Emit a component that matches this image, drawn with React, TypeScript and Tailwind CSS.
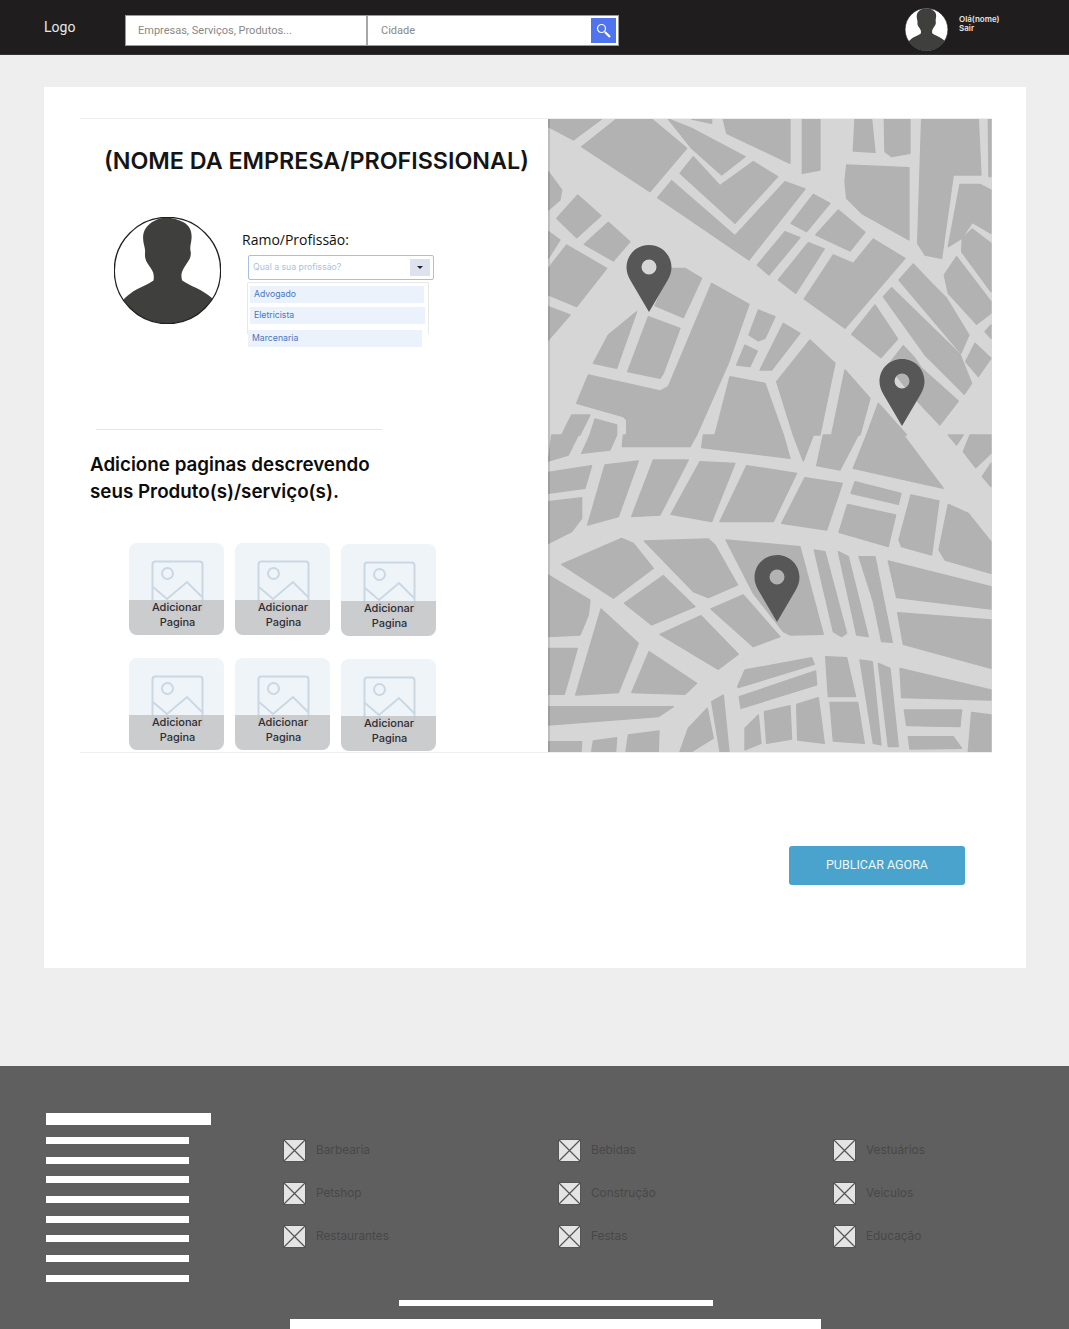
import { Fragment } from 'react'

// map blocks, traced from the picture in 3x coordinates
const mapTop = [
  '10,12 170,12 85,75 10,35', '110,95 215,12 320,12 425,100 315,230', '370,12 440,40 600,125 530,180 440,100',
  '440,12 500,12 500,25', '535,12 735,12 735,145 545,55', '772,12 825,12 825,165 772,175', '930,12 980,12 990,112 925,108',
  '1018,12 1095,12 1095,115 1040,125 1020,110', '1130,12 1300,12 1308,180 1225,180 1190,430 1140,420 1118,385',
  '1330,12 1338,12 1338,185 1332,185', '905,150 1092,158 1092,375 950,295 905,250 900,200',
  '445,125 525,212 625,140 698,185 570,325 405,175', '380,197 570,362 720,200 780,222 612,435 338,248',
  '805,238 855,265 785,350 738,325', '880,285 960,352 915,408 812,360', '720,350 765,368 672,480 637,450',
  '790,383 838,402 752,535 700,495', '865,420 925,445 985,372 1080,430 900,640 778,552',
  '1245,208 1305,208 1338,225 1338,355 1282,322 1250,370 1210,395', '1105,447 1165,510 1205,550 1272,660 1248,715 1062,495',
  '1235,425 1338,560 1338,595 1295,628 1210,535 1198,480', '1252,370 1282,342 1338,385 1338,530 1250,410',
  '1015,545 1040,518 1245,718 1280,805 1258,838 1140,720', '990,570 1058,672 1008,728 920,658', '1290,685 1338,730 1300,785 1262,740',
  '1338,630 1338,670 1320,650', '1075,692 1110,730 1130,760 1240,858 1185,930 1100,840 1030,750', '1000,865 1085,960 965,960',
  '10,170 50,225 45,255 10,285', '98,240 168,302 95,368 35,310', '190,322 255,380 205,438 118,388', '10,460 65,390 185,460 95,575 10,540',
  '10,350 45,375 10,430', '10,575 75,600 10,675', '380,460 420,460 470,490 415,608 330,572', '310,605 405,640 355,775 345,790 248,770',
  '275,590 215,760 145,745 190,660', '130,780 345,828 370,815 500,505 612,568 550,745 455,960 245,960 245,915 235,905 95,865',
  '640,585 690,605 660,670 640,678 612,660', '600,690 637,708 615,755 575,750', '715,625 765,655 680,765 645,765',
  '795,675 870,745 825,960 745,960 695,800', '555,785 660,805 715,960 510,960', '900,765 975,850 945,960 860,960',
  '80,900 135,900 105,960 50,960', '150,912 215,930 215,960 135,960',
]

const mapBottom = [
  '20,0 100,0 70,60 10,78', '135,0 215,0 195,45 110,55', '235,0 455,0 435,35 232,35', '475,0 715,0 735,70 470,38', '745,0 805,0 775,78',
  '835,0 940,0 885,105 815,92', '965,0 1075,0 1195,160 925,100', '1210,0 1255,0 1235,30', '1255,50 1275,0 1338,0 1338,55 1292,98',
  '1338,85 1338,155 1312,125', '10,112 140,92 120,160 10,175', '10,200 110,188 110,250 80,290 10,325', '180,90 280,78 220,245 128,270',
  '325,75 430,75 345,240 260,245', '465,80 570,85 500,260 378,238', '605,92 755,115 685,260 525,260', '780,128 892,145 845,285 710,265',
  '930,140 1068,175 1060,208 918,175', '908,208 1052,240 1030,335 882,292', '1098,180 1182,198 1160,360 1070,335 1062,315',
  '1210,208 1270,235 1338,320 1338,415 1200,375 1182,345', '50,388 230,310 265,325 325,400 205,490', '298,318 490,312 510,330 578,450 490,488 445,470',
  '543,315 765,335 835,598 735,600 715,590 625,475', '808,345 840,350 905,595 890,605 865,590', '880,350 910,365 970,605 935,600',
  '942,365 990,365 1042,622 1010,620 985,500', '1030,378 1338,455 1338,522 1055,488', '1058,533 1338,555 1338,700 1075,628',
  '355,422 450,515 320,570 238,505', '595,480 705,605 625,635 498,522', '468,542 580,658 520,703 345,598', '10,420 135,495 130,540 105,600 10,605',
  '10,640 97,640 58,778 10,778', '168,522 280,625 220,773 92,780', '312,650 455,745 420,778 260,773', '10,815 385,815 340,845 10,870',
  '10,920 110,920 108,950 10,950', '145,918 215,908 212,950 140,950', '250,900 342,888 340,950 243,950', '405,950 430,880 487,820 505,910 440,950',
  '500,800 535,780 552,950 525,950', '578,755 600,705 800,668 808,688 580,758', '583,785 812,708 815,750 588,820', '600,880 640,840 648,925 600,945',
  '658,830 735,812 740,912 665,925', '755,808 820,788 838,925 758,915', '842,665 905,668 932,785 850,785', '855,802 938,802 958,925 865,918',
  '945,675 982,680 1008,930 985,925', '1000,685 1035,700 1060,935 1030,935', '1065,700 1338,765 1338,795 1070,788', '1078,825 1250,825 1245,875 1085,872',
  '1090,905 1225,905 1250,940 1095,942', '1280,832 1338,840 1338,950 1270,950',
]

const pins = [
  { x: 649, y: 245 },
  { x: 902, y: 359 },
  { x: 777, y: 555 },
]

function MapPicture() {
  return (
    <svg width="444" height="633" viewBox="548 119 444 633" className="block shrink-0">
      <rect x="548" y="119" width="444" height="633" fill="#d6d6d6" />
      <g transform="translate(545 115) scale(0.3333)" fill="#b2b2b2" stroke="#b2b2b2" strokeWidth="4" strokeLinejoin="round">
        {mapTop.map((p) => <polygon key={p} points={p} />)}
      </g>
      <g transform="translate(545 435) scale(0.3333)" fill="#b2b2b2" stroke="#b2b2b2" strokeWidth="4" strokeLinejoin="round">
        {mapBottom.map((p) => <polygon key={p} points={p} />)}
      </g>
      <rect x="548" y="119" width="2" height="633" fill="#000" opacity="0.12" />
      {pins.map((pin) => (
        <path
          key={pin.x}
          transform={`translate(${pin.x} ${pin.y})`}
          fillRule="evenodd"
          fill="#575757"
          d="M0 0C12.6 0 22.5 9.9 22.5 22.3C22.5 27 21 31 18.5 35.5L0 67L-18.5 35.5C-21 31 -22.5 27 -22.5 22.3C-22.5 9.9 -12.6 0 0 0ZM0 14.5A7.5 7.5 0 1 0 0 29.5A7.5 7.5 0 1 0 0 14.5Z"
        />
      ))}
    </svg>
  )
}

function Avatar({ size }: { size: number }) {
  return (
    <svg width={size} height={size} viewBox="0 0 320 320" className="block shrink-0">
      <clipPath id={`face-${size}`}>
        <circle cx="160" cy="160" r="159" />
      </clipPath>
      <circle cx="160" cy="160" r="159" fill="#fff" />
      <path
        clipPath={`url(#face-${size})`}
        fill="#3f3f3e"
        d="M150 2C170 1 192 6 208 16C226 26 233 42 232 62C231 80 226 88 229 102C232 116 226 128 218 138C212 148 204 158 202 170C201 178 202 184 204 190C222 203 250 212 270 226C280 232 288 238 294 244L320 320L0 320L27 248C36 238 48 230 58 222C78 210 100 204 118 190C120 182 119 174 117 166C113 154 106 148 100 138C92 126 92 116 93 104C94 92 87 80 87 64C86 40 100 22 120 12C130 6 140 3 150 2Z"
      />
      <circle cx="160" cy="160" r="159" fill="none" stroke="#231f20" strokeWidth="4" />
    </svg>
  )
}

function PageCard({ shifted }: { shifted?: boolean }) {
  return (
    <div className={`relative w-[95px] h-[92px] rounded-lg overflow-hidden bg-[#eff4f8] ${shifted ? 'mt-px' : ''}`}>
      <svg width="53" height="52" viewBox="0 0 53 52" fill="none" stroke="#c9d8e3" strokeWidth="2" className="absolute left-[22px] top-[17px]">
        <rect x="1.5" y="1.5" width="50" height="49" rx="3" />
        <circle cx="16.5" cy="13.5" r="5.5" />
        <path d="M2 27L16 39L36 22L51 37" />
      </svg>
      <div className="absolute left-0 right-0 bottom-0 h-[35px] bg-[#c4c4c6]/85" />
      <div className="absolute left-0 right-0 bottom-0 h-[35px] text-center text-[11px] leading-[15px] font-medium text-[#2e2e33] font-['Inter',sans-serif]">
        <div className="pl-[1px]">Adicionar</div>
        <div className="pl-[2px]">Pagina</div>
      </div>
    </div>
  )
}

function BrokenImage() {
  return (
    <svg width="23" height="23" viewBox="0 0 23 23" className="block shrink-0">
      <rect x="0.5" y="0.5" width="22" height="22" fill="#e4e4e4" stroke="#555" />
      <path d="M1 1L22 22M22 1L1 22" stroke="#555" strokeWidth="1.2" />
    </svg>
  )
}

const categories = ['Barbearia', 'Bebidas', 'Vestuários', 'Petshop', 'Construção', 'Veiculos', 'Restaurantes', 'Festas', 'Educação']
const footerLines = [0, 1, 2, 3, 4, 5, 6, 7]

export default function App() {
  return (
    <div className="w-[1069px] h-[1329px] overflow-hidden bg-[#eeeeee] font-['Roboto',sans-serif]">
      <header className="h-[55px] bg-[#1f1d1e] flex items-center border-b border-[#333]">
        <span className="ml-[44px] w-[81px] mt-[1px] text-[14px] text-[#e8e8e8]">Logo</span>
        <div className="w-[494px] h-[31px] bg-white border border-[#9a9a9a] flex items-center mt-[6px] text-[11px] text-[#888]">
          <div className="w-[242px] h-full flex items-center pt-[3px] pl-[12px] border-r-2 border-[#a8a8a8]">Empresas, Serviços, Produtos...</div>
          <div className="flex-1 pt-[3px] pl-[13px]">Cidade</div>
          <div className="w-[25px] h-[25px] mr-[2px] bg-[#4f74ef] flex items-center justify-center">
            <svg width="15" height="15" viewBox="0 0 15 15" fill="none">
              <circle cx="5.5" cy="5.5" r="4" stroke="#fff" strokeWidth="1.2" />
              <path d="M9 9L14 14" stroke="#fff" strokeWidth="2.2" />
            </svg>
          </div>
        </div>
        <div className="ml-[286px] mt-[4px]">
          <Avatar size={43} />
        </div>
        <div className="ml-[11px] -mt-[7px] text-[8px] leading-[9px] font-semibold text-[#e4e4e4] font-['Inter',sans-serif]">
          <div>Olá(nome)</div>
          <div>Sair</div>
        </div>
      </header>

      <main className="mt-[32px] ml-[44px] w-[982px] h-[881px] bg-white pt-[31px] pl-[36px] pr-[34px]">
        <div className="flex h-[635px] border-y border-[#eeeeee]">
          <div className="w-[468px] shrink-0">
            <h1 className="mt-[25px] ml-[24px] text-[23.3px] leading-[34px] font-semibold text-[#141414] whitespace-nowrap font-['Inter',sans-serif]">(NOME DA EMPRESA/PROFISSIONAL)</h1>
            <div className="flex mt-[39px] ml-[34px]">
              <Avatar size={107} />
              <div className="ml-[21px] pt-[13px]">
                <div className="text-[14px] leading-[20px] text-[#111] font-['Open_Sans',sans-serif]">Ramo/Profissão:</div>
                <div className="mt-[5px] ml-[6px] w-[186px] h-[25px] border border-[#a7bfe0] rounded-[2px] flex items-center justify-between pl-[4px] pr-[3px] text-[8.7px] text-[#a9bfe0] font-['Inter',sans-serif]">
                  <span>Qual a sua profissão?</span>
                  <span className="w-[20px] h-[17px] bg-[#dde2ee] flex items-center justify-center">
                    <span className="w-0 h-0 border-x-[3px] border-x-transparent border-t-[3px] border-t-[#222]" />
                  </span>
                </div>
                <div className="mt-[2px] ml-[5px] w-[182px] h-[52px] border-x border-t border-[#e8e8e8] rounded-t-[2px] pt-[3px] pl-[2px] text-[8.7px] text-[#4a75bd] font-['Inter',sans-serif]">
                  <div className="w-[174px] h-[17px] bg-[#ebf2fc] flex items-center pl-[4px]">Advogado</div>
                  <div className="mt-[4px] w-[175px] h-[17px] bg-[#ebf2fc] flex items-center pl-[4px]">Eletricista</div>
                </div>
                <div className="-mt-[4px] ml-[6px] relative w-[174px] h-[17px] bg-[#ebf2fc] flex items-center pl-[4px] text-[8.7px] text-[#4a75bd] font-['Inter',sans-serif]">Marcenaria</div>
              </div>
            </div>
            <div className="mt-[82px] ml-[16px] w-[286px] h-px bg-[#e5e5e5]" />
            <h2 className="mt-[22px] ml-[10px] text-[18.8px] leading-[26.5px] font-semibold text-[#0c0c0c] font-['Inter',sans-serif]">
              Adicione paginas descrevendo
              <br />
              seus Produto(s)/serviço(s).
            </h2>
            <div className="mt-[38px] ml-[49px] grid grid-cols-[95px_95px_95px] gap-x-[11px] gap-y-[22px]">
              {[0, 1].map((row) => (
                <Fragment key={row}>
                  <PageCard />
                  <PageCard />
                  <PageCard shifted />
                </Fragment>
              ))}
            </div>
          </div>
          <MapPicture />
        </div>
        <div className="flex justify-end mt-[93px] pr-[27px]">
          <button className="w-[176px] h-[39px] rounded-[3px] bg-[#4aa3cd] text-[12.5px] text-[#eef7fb]">PUBLICAR AGORA</button>
        </div>
      </main>

      <footer className="mt-[98px] h-[263px] bg-[#5f5f5f] pt-[47px]">
        <div className="flex">
          <div className="ml-[46px] w-[237px] shrink-0">
            <div className="w-[165px] h-[12px] bg-white" />
            <div className="mt-[12px] flex flex-col gap-[12.7px]">
              {footerLines.map((line) => (
                <div key={line} className="w-[143px] h-[7px] bg-white" />
              ))}
            </div>
          </div>
          <div className="grid grid-cols-[275px_275px_200px] auto-rows-[23px] gap-y-[20px] content-start pt-[26px]">
            {categories.map((name) => (
              <div key={name} className="flex items-center h-[23px] gap-[10px] text-[11.8px] text-[#484848] font-['Inter',sans-serif]">
                <BrokenImage />
                {name}
              </div>
            ))}
          </div>
        </div>
        <div className="mt-[18px] ml-[399px] w-[314px] h-[6px] bg-white" />
        <div className="mt-[13px] ml-[290px] w-[531px] h-[10px] bg-white" />
      </footer>
    </div>
  )
}
